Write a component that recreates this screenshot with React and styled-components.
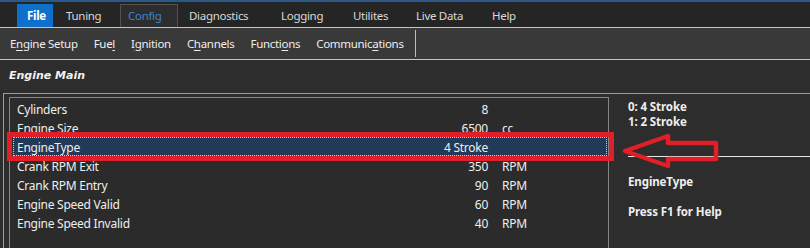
import React from "react";
import styled, { createGlobalStyle } from "styled-components";

const Global = createGlobalStyle`
  html, body { margin: 0; padding: 0; background: #2d2d2d; overflow: hidden; }
  body { font-family: "Noto Sans", "Open Sans", sans-serif; font-size: 12px; color: #ececec; }
`;

const Page = styled.div`
  width: 810px;
  height: 248px;
  display: flex;
  flex-direction: column;
  overflow: hidden;
  border-top: 2px solid #2a5889;
  box-sizing: border-box;
`;

const MenuBar = styled.div`
  height: 25px;
  background: #252525;
  display: flex;
  align-items: flex-end;
  padding-left: 17px;
  border-bottom: 1px solid #c4c4c4;
`;

const Tab = styled.div`
  box-sizing: border-box;
  height: 23px;
  width: ${p => p.$w}px;
  padding-left: ${p => p.$pl}px;
  line-height: 22px;
  font-size: 11.5px;
  letter-spacing: -0.3px;
  white-space: nowrap;
  color: ${p => (p.$primary ? "#ffffff" : p.$active ? "#3b86c9" : "#d9d9d9")};
  background: ${p => (p.$primary ? "#0f70cb" : p.$active ? "#2d2d2d" : "transparent")};
  font-weight: ${p => (p.$primary ? 700 : 400)};
  border: 1px solid ${p => (p.$active ? "#505050" : "transparent")};
  border-bottom: none;
`;

const SubBar = styled.div`
  height: 31px;
  background: #393939;
  display: flex;
  align-items: center;
  padding-left: 10px;
  gap: 16px;
  border-bottom: 1px solid #c4c4c4;
`;

const SubItem = styled.span`
  color: #eeeeee;
  font-size: 11.5px;
  letter-spacing: -0.3px;
  white-space: nowrap;
  u { text-decoration: underline; text-underline-offset: 2px; }
`;

const SubSep = styled.div`
  width: 1px;
  height: 27px;
  background: #bdbdbd;
  margin-left: -5px;
`;

const TitleRow = styled.div`
  height: 33px;
  display: flex;
  align-items: center;
  padding-left: 9px;
  box-sizing: border-box;
  padding-bottom: 2px;
`;

const Title = styled.span`
  font-family: "DejaVu Sans", sans-serif;
  font-size: 11px;
  font-weight: 700;
  font-style: italic;
  color: #f2f2f2;
`;

const Group = styled.div`
  flex: 1;
  margin-left: 3px;
  border-top: 1px solid #9c9c9c;
  border-left: 1px solid #9c9c9c;
  display: flex;
  padding: 3px 0 0 5px;
  min-height: 0;
`;

const ListBox = styled.div`
  width: 600px;
  box-sizing: border-box;
  border: 1px solid #858585;
  border-bottom: none;
  background: #2b2b2b;
  padding-top: 1px;
  display: flex;
  flex-direction: column;
`;

const Row = styled.div`
  position: relative;
  box-sizing: border-box;
  height: 19px;
  margin: 0 1px 0 3px;
  padding: 2px 0 0 4px;
  display: grid;
  grid-template-columns: 395px 76px 1fr;
  align-items: center;
  line-height: 17px;
  font-size: 12px;
  letter-spacing: -0.25px;
  color: #eeeeee;
  background: ${p => (p.$selected ? "#213a57" : "transparent")};
  outline: ${p => (p.$selected ? "1px dotted #d0d6de" : "none")};
  outline-offset: -1px;
`;

const Value = styled.span`
  text-align: right;
`;

const Unit = styled.span`
  padding-left: 14px;
`;

const Highlight = styled.div`
  position: absolute;
  top: -5px;
  bottom: -5px;
  left: -6px;
  right: -7px;
  border: 5px solid #e01f29;
  pointer-events: none;
`;

const Side = styled.div`
  position: relative;
  flex: 1;
  padding: 2px 0 0 19px;
  display: flex;
  flex-direction: column;
  font-weight: 700;
  font-size: 11.5px;
  letter-spacing: -0.1px;
  line-height: 15px;
  color: #eeeeee;
`;

const Line = styled.div`
  margin-top: ${p => p.$mt || 0}px;
`;

const Separator = styled.div`
  height: 1px;
  background: #e6e6e6;
  margin-top: 27px;
`;

const Arrow = styled.svg`
  position: absolute;
  left: 12px;
  top: 35px;
`;

const tabs = [
  { t: "File", w: 36, pl: 9, primary: true },
  { t: "Tuning", w: 67, pl: 12 },
  { t: "Config", w: 58, pl: 7, active: true },
  { t: "Diagnostics", w: 90, pl: 10 },
  { t: "Logging", w: 72, pl: 12 },
  { t: "Utilites", w: 63, pl: 12 },
  { t: "Live Data", w: 76, pl: 12 },
  { t: "Help", w: 60, pl: 12 },
];

const rows = [
  { l: "Cylinders", v: "8", u: "" },
  { l: "Engine Size", v: "6500", u: "cc" },
  { l: "EngineType", v: "4 Stroke", u: "", sel: true },
  { l: "Crank RPM Exit", v: "350", u: "RPM" },
  { l: "Crank RPM Entry", v: "90", u: "RPM" },
  { l: "Engine Speed Valid", v: "60", u: "RPM" },
  { l: "Engine Speed Invalid", v: "40", u: "RPM" },
];

export default function App() {
  return (
    <>
      <Global />
      <Page>
        <MenuBar>
          {tabs.map(t => (
            <Tab key={t.t} $w={t.w} $pl={t.pl} $primary={t.primary} $active={t.active}>
              {t.t}
            </Tab>
          ))}
        </MenuBar>
        <SubBar>
          <SubItem>E<u>n</u>gine Setup</SubItem>
          <SubItem>Fue<u>l</u></SubItem>
          <SubItem>I<u>g</u>nition</SubItem>
          <SubItem>C<u>h</u>annels</SubItem>
          <SubItem>Functi<u>o</u>ns</SubItem>
          <SubItem>Communic<u>a</u>tions</SubItem>
          <SubSep />
        </SubBar>
        <TitleRow>
          <Title>Engine Main</Title>
        </TitleRow>
        <Group>
          <ListBox>
            {rows.map(r => (
              <Row key={r.l} $selected={r.sel}>
                <span>{r.l}</span>
                <Value>{r.v}</Value>
                <Unit>{r.u}</Unit>
                {r.sel && <Highlight />}
              </Row>
            ))}
          </ListBox>
          <Side>
            <Line>0: 4 Stroke</Line>
            <Line>1: 2 Stroke</Line>
            <Separator />
            <Line $mt={17}>EngineType</Line>
            <Line $mt={15}>Press F1 for Help</Line>
            <Arrow width="100" height="40" viewBox="0 0 100 40">
              <polygon
                points="4,19 47,4 47,11 95,11 95,27 47,27 47,34"
                fill="none"
                stroke="#e01f29"
                strokeWidth="4.5"
                strokeLinejoin="round"
              />
            </Arrow>
          </Side>
        </Group>
      </Page>
    </>
  );
}
